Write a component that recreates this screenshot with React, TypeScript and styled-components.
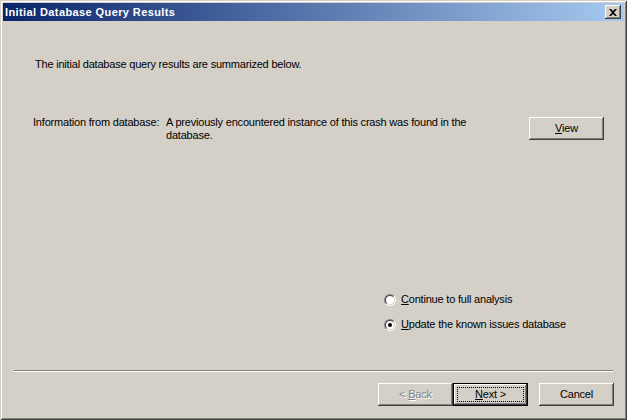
import React from 'react';
import styled, { createGlobalStyle } from 'styled-components';

const GlobalStyle = createGlobalStyle`
	html, body {
		margin: 0;
		padding: 0;
		background: #d4d0c8;
	}
	* {
		box-sizing: border-box;
	}
`;

const face = '#d4d0c8';
const font = `"Liberation Sans", Arial, sans-serif`;

const Window = styled.div`
	display: flex;
	flex-direction: column;
	width: 627px;
	height: 420px;
	background: ${face};
	padding: 3px;
	box-shadow:
		inset 1px 1px ${face},
		inset -1px -1px #404040,
		inset 2px 2px #ffffff,
		inset -2px -2px #808080;
	font-family: ${font};
	font-size: 11px;
	letter-spacing: -0.2px;
	color: #000;
`;

const TitleBar = styled.div`
	display: flex;
	align-items: center;
	justify-content: space-between;
	height: 18px;
	padding: 0 3px 0 2px;
	background: linear-gradient(to right, #0a246a, #a6caf0);
`;

const Title = styled.span`
	color: #fff;
	font-weight: bold;
	font-size: 11px;
	letter-spacing: 0.4px;
	line-height: 13px;
`;

const CloseButton = styled.div`
	display: flex;
	align-items: center;
	justify-content: center;
	width: 16px;
	height: 14px;
	background: ${face};
	box-shadow:
		inset -1px -1px #404040,
		inset 1px 1px #ffffff,
		inset -2px -2px #808080;
`;

const Body = styled.div`
	display: flex;
	flex-direction: column;
	flex: 1;
	padding: 0 11px 11px 11px;
`;

const Intro = styled.p`
	margin: 37px 0 0 21px;
	line-height: 13px;
`;

const InfoRow = styled.div`
	display: flex;
	align-items: flex-start;
	margin: 45px 9px 0 19px;
`;

const InfoLabel = styled.span`
	flex-shrink: 0;
	width: 133px;
	line-height: 13px;
`;

const InfoValue = styled.span`
	width: 315px;
	line-height: 13px;
`;

const Button = styled.div<{ $default?: boolean; $disabled?: boolean }>`
	position: relative;
	display: flex;
	align-items: center;
	justify-content: center;
	width: 75px;
	height: 23px;
	background: ${face};
	color: ${p => (p.$disabled ? '#808080' : '#000')};
	text-shadow: ${p => (p.$disabled ? '1px 1px #ffffff' : 'none')};
	line-height: 13px;
	box-shadow: ${p =>
		p.$default
			? `inset 0 0 0 1px #000, inset -2px -2px #404040, inset 2px 2px #ffffff, inset -3px -3px #808080`
			: `inset -1px -1px #404040, inset 1px 1px #ffffff, inset -2px -2px #808080`};
`;

const ViewButton = styled(Button)`
	margin: 1px 0 0 auto;
`;

const FocusRing = styled.span`
	position: absolute;
	inset: 4px;
	border: 1px dotted #000;
`;

const Key = styled.span`
	text-decoration: underline;
	text-underline-offset: 1px;
`;

const RadioGroup = styled.div`
	display: flex;
	flex-direction: column;
	gap: 12px;
	margin: auto 0 39px 370px;
`;

const RadioRow = styled.label`
	display: flex;
	align-items: center;
	gap: 5px;
	height: 13px;
	line-height: 13px;
`;

const RadioOuter = styled.span`
	display: block;
	width: 12px;
	height: 12px;
	border-radius: 50%;
	border: 1px solid;
	border-color: #808080 #ffffff #ffffff #808080;
`;

const RadioInner = styled.span<{ $checked?: boolean }>`
	display: flex;
	align-items: center;
	justify-content: center;
	width: 10px;
	height: 10px;
	border-radius: 50%;
	border: 1px solid;
	border-color: #404040 ${face} ${face} #404040;
	background: #fff;

	&::after {
		content: '';
		display: ${p => (p.$checked ? 'block' : 'none')};
		width: 4px;
		height: 4px;
		border-radius: 50%;
		background: #000;
	}
`;

const Separator = styled.div`
	height: 2px;
	border-top: 1px solid #808080;
	border-bottom: 1px solid #ffffff;
`;

const ButtonRow = styled.div`
	display: flex;
	justify-content: flex-end;
	align-items: center;
	margin: 11px -1px 0 0;
`;

const Gap = styled.div`
	width: 11px;
`;

function Radio({ checked, children }: { checked?: boolean; children: React.ReactNode }) {
	return (
		<RadioRow>
			<RadioOuter>
				<RadioInner $checked={checked} />
			</RadioOuter>
			<span>{children}</span>
		</RadioRow>
	);
}

export default function App() {
	return (
		<>
			<GlobalStyle />
			<Window>
				<TitleBar>
					<Title>Initial Database Query Results</Title>
					<CloseButton>
						<svg width="8" height="7" viewBox="0 0 8 7">
							<path d="M0 0h2l2 2 2-2h2L5 3.5 8 7H6L4 5 2 7H0l3-3.5z" fill="#000" />
						</svg>
					</CloseButton>
				</TitleBar>
				<Body>
					<Intro>The initial database query results are summarized below.</Intro>
					<InfoRow>
						<InfoLabel>Information from database:</InfoLabel>
						<InfoValue>A previously encountered instance of this crash was found in the database.</InfoValue>
						<ViewButton><span><Key>V</Key>iew</span></ViewButton>
					</InfoRow>
					<RadioGroup>
						<Radio><Key>C</Key>ontinue to full analysis</Radio>
						<Radio checked><Key>U</Key>pdate the known issues database</Radio>
					</RadioGroup>
					<Separator />
					<ButtonRow>
						<Button $disabled><span>&lt; <Key>B</Key>ack</span></Button>
						<Button $default>
							<FocusRing />
							<span><Key>N</Key>ext &gt;</span>
						</Button>
						<Gap />
						<Button>Cancel</Button>
					</ButtonRow>
				</Body>
			</Window>
		</>
	);
}
